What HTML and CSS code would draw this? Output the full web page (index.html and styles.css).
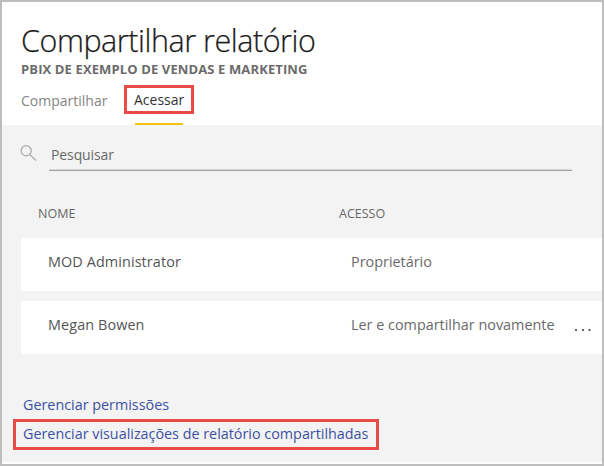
FILE: index.html
```html
<!DOCTYPE html>
<html lang="pt-BR">
<head>
<meta charset="utf-8">
<title>Compartilhar relatório</title>
<link rel="stylesheet" href="styles.css">
</head>
<body>
<div class="panel">
  <header class="header">
    <h1 class="title">Compartilhar relatório</h1>
    <h2 class="subtitle">PBIX DE EXEMPLO DE VENDAS E MARKETING</h2>
    <nav class="tabs">
      <a class="tab">Compartilhar</a>
      <a class="tab active"><span class="highlight tab-mark">Acessar</span></a>
    </nav>
  </header>
  <main class="content">
    <div class="search">
      <svg class="search-icon" width="18" height="18" viewBox="0 0 18 18"><circle cx="6.2" cy="6.8" r="5.1"/><path d="M10 10.6 L16 16.5"/></svg>
      <div class="field">Pesquisar</div>
    </div>
    <div class="columns"><span>NOME</span><span>ACESSO</span></div>
    <div class="rows">
      <div class="row"><span class="name">MOD Administrator</span><span class="access">Proprietário</span></div>
      <div class="row"><span class="name">Megan Bowen</span><span class="access">Ler e compartilhar novamente</span>
        <svg class="more" width="18" height="4" viewBox="0 0 18 4"><circle cx="2" cy="2" r="1.1"/><circle cx="9" cy="2" r="1.1"/><circle cx="15.5" cy="2" r="1.1"/></svg>
      </div>
    </div>
    <div class="links">
      <a class="link permissions">Gerenciar permissões</a>
      <a class="link highlight link-mark">Gerenciar visualizações de relatório compartilhadas</a>
    </div>
  </main>
</div>
</body>
</html>
```
FILE: styles.css
```css
* { box-sizing: border-box; }
body {
  margin: 0;
  font-family: "Open Sans", "Noto Sans", sans-serif;
  font-size: 14px;
  line-height: 20px;
  color: #555;
}
.panel {
  width: 604px;
  height: 466px;
  border: 2px solid #bdbdbd;
  background: #fff;
  overflow: hidden;
}
.header { height: 123px; padding: 18px 0 0 19px; display: flex; flex-direction: column; }
.title {
  margin: 0;
  font-size: 30.5px;
  line-height: 40px;
  font-weight: 300;
  letter-spacing: -0.45px;
  color: #1c1c1c;
  -webkit-text-stroke: 0.25px #1c1c1c;
  white-space: nowrap;
}
.subtitle { margin: 0; font-size: 13px; line-height: 18px; font-weight: 700; letter-spacing: 0.12px; color: #6b6b6b; white-space: nowrap; }
.tabs { display: flex; flex: 1; padding-top: 7px; }
.tab { width: 103px; padding-top: 6px; color: #858585; white-space: nowrap; }
.tab.active { width: 70px; padding: 0; color: #333; display: flex; flex-direction: column; justify-content: space-between; align-items: center; }
.tab.active::after { content: ""; width: 48px; height: 2px; background: #f2c40f; }
.highlight { border: 3px solid #e94b47; }
.tab-mark { width: 70px; height: 29px; padding-left: 7px; line-height: 23px; }
.content { height: 337px; background: #f3f3f3; }
.search { display: flex; padding: 19px 0 0 18px; height: 79px; }
.search-icon { fill: none; stroke: #aaa; stroke-width: 1.3; flex: none; }
.field {
  width: 523px;
  height: 27px;
  margin-left: 11px;
  padding-left: 2px;
  border-bottom: 1px solid #a0a0a0;
  box-shadow: inset 0 -1px #d8d8d8;
  line-height: 22px;
  letter-spacing: -0.1px;
  color: #696969;
}
.columns { display: flex; height: 34px; padding-left: 36px; font-size: 12.5px; color: #666; }
.columns span:first-child { width: 301px; }
.rows { display: grid; gap: 10px; padding-left: 19px; }
.row { height: 53px; background: #fff; display: flex; padding: 14px 0 0 27px; white-space: nowrap; }
.name { width: 303px; font-size: 14.4px; letter-spacing: 0.1px; }
.access { width: 223px; font-size: 14.4px; color: #696969; }
.more { margin-top: 13px; fill: #444; flex: none; }
.links { padding: 41px 0 0 11px; color: #3c51a3; font-size: 14.35px; }
.link { display: block; white-space: nowrap; }
.permissions { margin-left: 10px; height: 24px; }
.link-mark { width: 366px; height: 31px; padding-left: 7px; line-height: 24px; }
```
